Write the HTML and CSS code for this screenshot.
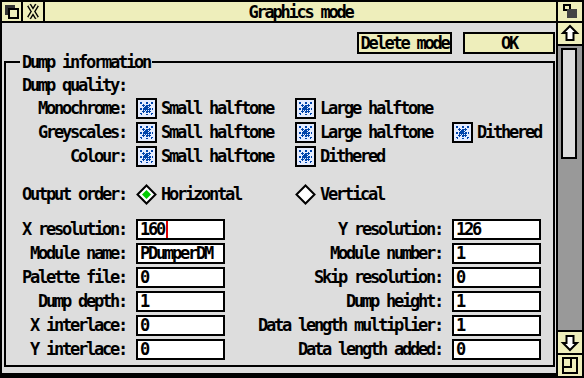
FILE: index.html
```html
<!DOCTYPE html>
<html>
<head>
<meta charset="utf-8">
<link rel="stylesheet" href="styles.css">
</head>
<body>
<div class="window">
  <div class="titlebar">
    <div class="ticon">
      <svg width="19" height="19" viewBox="0 0 19 19" shape-rendering="crispEdges">
        <rect x="3" y="3" width="10" height="10" fill="#333"/>
        <rect x="7" y="7" width="9" height="9" fill="#eeeebb" stroke="#000" stroke-width="2"/>
      </svg>
    </div>
    <div class="ticon">
      <svg width="20" height="19" viewBox="0 0 20 19">
        <path d="M6 3 L14 16 M14 3 L6 16" stroke="#000" stroke-width="4.5" fill="none"/>
        <path d="M6 3 L14 16 M14 3 L6 16" stroke="#eeeebb" stroke-width="1.8" fill="none"/>
      </svg>
    </div>
    <div class="title">Graphics mode</div>
  </div>
  <div class="ticon">
    <svg width="24" height="19" viewBox="0 0 24 19" shape-rendering="crispEdges">
      <rect x="6" y="3" width="6" height="5" fill="#eeeebb" stroke="#000" stroke-width="2"/>
      <rect x="9" y="7" width="10" height="9" fill="#444"/>
    </svg>
  </div>

  <div class="work">
    <div class="actions">
      <div class="btn btn-delete">Delete mode</div>
      <div class="btn btn-ok">OK</div>
    </div>
    <fieldset class="group">
      <legend>Dump information</legend>
      <div class="subhead">Dump quality:</div>
      <div class="options">
        <span class="lbl">Monochrome:</span>
        <span class="opt"><svg class="check" viewBox="0 0 21 21" shape-rendering="crispEdges"><rect x="1" y="1" width="19" height="19" fill="#e4ecff" stroke="#000" stroke-width="2"/><path d="M4 10.5 H17 M10.5 4 V17 M4.5 4.5 L16.5 16.5 M16.5 4.5 L4.5 16.5" stroke="#0044aa" stroke-width="2" stroke-dasharray="2 1"/></svg>Small halftone</span>
        <span class="opt"><svg class="check" viewBox="0 0 21 21" shape-rendering="crispEdges"><rect x="1" y="1" width="19" height="19" fill="#e4ecff" stroke="#000" stroke-width="2"/><path d="M4 10.5 H17 M10.5 4 V17 M4.5 4.5 L16.5 16.5 M16.5 4.5 L4.5 16.5" stroke="#0044aa" stroke-width="2" stroke-dasharray="2 1"/></svg>Large halftone</span>
        <span></span>

        <span class="lbl">Greyscales:</span>
        <span class="opt"><svg class="check" viewBox="0 0 21 21" shape-rendering="crispEdges"><rect x="1" y="1" width="19" height="19" fill="#e4ecff" stroke="#000" stroke-width="2"/><path d="M4 10.5 H17 M10.5 4 V17 M4.5 4.5 L16.5 16.5 M16.5 4.5 L4.5 16.5" stroke="#0044aa" stroke-width="2" stroke-dasharray="2 1"/></svg>Small halftone</span>
        <span class="opt"><svg class="check" viewBox="0 0 21 21" shape-rendering="crispEdges"><rect x="1" y="1" width="19" height="19" fill="#e4ecff" stroke="#000" stroke-width="2"/><path d="M4 10.5 H17 M10.5 4 V17 M4.5 4.5 L16.5 16.5 M16.5 4.5 L4.5 16.5" stroke="#0044aa" stroke-width="2" stroke-dasharray="2 1"/></svg>Large halftone</span>
        <span class="opt"><svg class="check" viewBox="0 0 21 21" shape-rendering="crispEdges"><rect x="1" y="1" width="19" height="19" fill="#e4ecff" stroke="#000" stroke-width="2"/><path d="M4 10.5 H17 M10.5 4 V17 M4.5 4.5 L16.5 16.5 M16.5 4.5 L4.5 16.5" stroke="#0044aa" stroke-width="2" stroke-dasharray="2 1"/></svg>Dithered</span>

        <span class="lbl">Colour:</span>
        <span class="opt"><svg class="check" viewBox="0 0 21 21" shape-rendering="crispEdges"><rect x="1" y="1" width="19" height="19" fill="#e4ecff" stroke="#000" stroke-width="2"/><path d="M4 10.5 H17 M10.5 4 V17 M4.5 4.5 L16.5 16.5 M16.5 4.5 L4.5 16.5" stroke="#0044aa" stroke-width="2" stroke-dasharray="2 1"/></svg>Small halftone</span>
        <span class="opt"><svg class="check" viewBox="0 0 21 21" shape-rendering="crispEdges"><rect x="1" y="1" width="19" height="19" fill="#e4ecff" stroke="#000" stroke-width="2"/><path d="M4 10.5 H17 M10.5 4 V17 M4.5 4.5 L16.5 16.5 M16.5 4.5 L4.5 16.5" stroke="#0044aa" stroke-width="2" stroke-dasharray="2 1"/></svg>Dithered</span>
        <span></span>
      </div>
      <div class="options order">
        <span class="lbl">Output order:</span>
        <span class="opt"><svg class="radio" viewBox="0 0 21 21"><path d="M10.5 1.5 L19.5 10.5 L10.5 19.5 L1.5 10.5 Z" fill="#fff" stroke="#000" stroke-width="2"/><path d="M10.5 6 L15 10.5 L10.5 15 L6 10.5 Z" fill="#00cc00"/></svg>Horizontal</span>
        <span class="opt"><svg class="radio" viewBox="0 0 21 21"><path d="M10.5 1.5 L19.5 10.5 L10.5 19.5 L1.5 10.5 Z" fill="#fff" stroke="#000" stroke-width="2"/></svg>Vertical</span>
        <span></span>
      </div>
      <div class="fields">
        <span class="lbl">X resolution:</span>
        <span class="field">160<span class="caret"></span></span>
        <span class="lbl">Y resolution:</span>
        <span class="field">126</span>

        <span class="lbl">Module name:</span>
        <span class="field">PDumperDM</span>
        <span class="lbl">Module number:</span>
        <span class="field">1</span>

        <span class="lbl">Palette file:</span>
        <span class="field">0</span>
        <span class="lbl">Skip resolution:</span>
        <span class="field">0</span>

        <span class="lbl">Dump depth:</span>
        <span class="field">1</span>
        <span class="lbl">Dump height:</span>
        <span class="field">1</span>

        <span class="lbl">X interlace:</span>
        <span class="field">0</span>
        <span class="lbl">Data length multiplier:</span>
        <span class="field">1</span>

        <span class="lbl">Y interlace:</span>
        <span class="field">0</span>
        <span class="lbl">Data length added:</span>
        <span class="field">0</span>
      </div>
    </fieldset>
  </div>

  <div class="vscroll">
    <div class="sicon">
      <svg width="24" height="21" viewBox="0 0 24 21">
        <path d="M12 3 L19 10 L15.5 10 L15.5 17 L8.5 17 L8.5 10 L5 10 Z" fill="#fff" stroke="#000" stroke-width="2" stroke-linejoin="miter"/>
      </svg>
    </div>
    <div class="well"><div class="thumb"></div></div>
    <div class="sicon">
      <svg width="24" height="21" viewBox="0 0 24 21">
        <path d="M12 18 L19 11 L15.5 11 L15.5 4 L8.5 4 L8.5 11 L5 11 Z" fill="#fff" stroke="#000" stroke-width="2" stroke-linejoin="miter"/>
      </svg>
    </div>
    <div class="sicon">
      <svg width="24" height="21" viewBox="0 0 24 21" shape-rendering="crispEdges">
        <rect x="5" y="3" width="14" height="15" fill="#eeeebb" stroke="#000" stroke-width="2"/>
        <path d="M13 3 L13 12 L5 12" fill="none" stroke="#000" stroke-width="2"/>
      </svg>
    </div>
  </div>
</div>
</body>
</html>
```

FILE: styles.css
```css
* {
  box-sizing: border-box;
}

html,
body {
  margin: 0;
  padding: 0;
}

body {
  width: 584px;
  height: 378px;
  overflow: hidden;
  background: #fff;
  color: #000;
  font-family: "DejaVu Sans Mono", "Liberation Mono", monospace;
  font-weight: bold;
  font-size: 17px;
  letter-spacing: -2.23px;
  line-height: 16px;
}

.window {
  width: 584px;
  height: 378px;
  background: #000;
  padding: 2px;
  display: grid;
  grid-template-columns: 1fr 24px;
  grid-template-rows: 19px 1fr;
  gap: 2px;
}

.titlebar {
  display: grid;
  grid-template-columns: 19px 20px 1fr;
  gap: 2px;
  background: #000;
}

.ticon,
.sicon {
  background: #eeeebb;
  display: flex;
  align-items: center;
  justify-content: center;
}

.ticon svg,
.sicon svg {
  display: block;
}

.title {
  background: #eeeebb;
  display: flex;
  align-items: center;
  justify-content: center;
}

.work {
  background: #ddd;
  margin-bottom: 3px;
  padding: 9px 1px 6px 2px;
  display: flex;
  flex-direction: column;
}

.actions {
  display: flex;
  justify-content: flex-end;
  gap: 11px;
}

.btn {
  height: 22px;
  border: 2px solid #000;
  background: #eeeebb;
  display: flex;
  align-items: center;
  justify-content: center;
}

.btn-delete {
  width: 95px;
}

.btn-ok {
  width: 92px;
}

.group {
  flex: 1;
  margin: 0;
  min-width: 0;
  border: 2px solid #000;
  padding: 4px 12px 0 16px;
}

.group legend {
  padding: 0 2px;
  margin-left: -2px;
  line-height: 16px;
}

.subhead {
  height: 22px;
  line-height: 22px;
}

.options {
  display: grid;
  grid-template-columns: 104px 149px 147px auto;
  grid-auto-rows: 24px;
  column-gap: 10px;
  align-items: center;
}

.lbl {
  text-align: right;
  white-space: nowrap;
}

.opt {
  display: flex;
  align-items: center;
  gap: 4px;
  white-space: nowrap;
}

.check,
.radio {
  flex: none;
  display: block;
  width: 21px;
  height: 21px;
}

.order {
  margin-top: 14px;
}

.fields {
  margin-top: 11px;
  display: grid;
  grid-template-columns: 104px 89px 1fr 89px;
  grid-auto-rows: 24px;
  column-gap: 10px;
  align-items: center;
}

.field {
  height: 21px;
  border: 2px solid #000;
  background: #fff;
  padding-left: 2px;
  display: flex;
  align-items: center;
  white-space: nowrap;
}

.caret {
  width: 2px;
  height: 17px;
  margin-left: 2px;
  border-left: 1px solid #dd0000;
  border-right: 1px solid #dd0000;
}

.vscroll {
  display: flex;
  flex-direction: column;
  gap: 2px;
  background: #000;
}

.sicon {
  height: 21px;
  flex: none;
}

.well {
  flex: 1;
  background: #999;
  padding: 2px 5px 0 3px;
}

.thumb {
  height: 111px;
  border: 2px solid #000;
  background: #ddd;
}
```
